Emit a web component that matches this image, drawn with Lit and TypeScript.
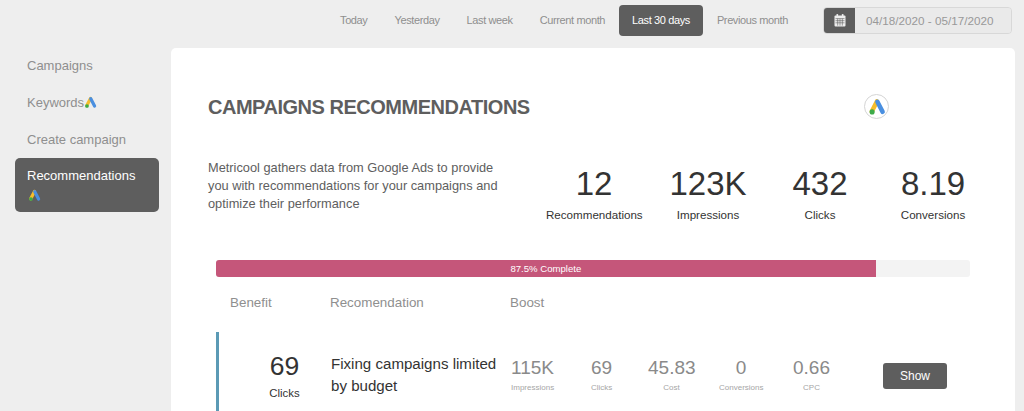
import { LitElement, html, css, svg } from "lit";
import { customElement } from "lit/decorators.js";

const ads = (size: number) => html`<svg class="ads" width=${size} height=${size} viewBox="0 0 24 24" aria-hidden="true">
  ${svg`<path d="M12 4.5 L5 18" stroke="#f6bd2b" stroke-width="6" stroke-linecap="round" fill="none"/>
  <path d="M12.5 5 L19.5 18.5" stroke="#4a8fe0" stroke-width="6" stroke-linecap="round" fill="none"/>
  <circle cx="5.5" cy="18.5" r="3.4" fill="#3dab4a"/>`}
</svg>`;

const calendar = html`<svg width="12" height="13" viewBox="0 0 12 13" aria-hidden="true">
  ${svg`<rect x="0.5" y="1.5" width="11" height="11" rx="1" fill="#eee"/>
  <rect x="2.5" y="0" width="1.6" height="3" rx=".6" fill="#eee"/>
  <rect x="7.9" y="0" width="1.6" height="3" rx=".6" fill="#eee"/>
  <path d="M1.5 4.6h9M1.5 6.7h9M1.5 8.8h9M3.7 4.6v7M6 4.6v7M8.3 4.6v7" stroke="#5e5e5e" stroke-width=".6" fill="none"/>`}
</svg>`;

@customElement("app-root")
export class AppRoot extends LitElement {
  static styles = css`
    :host {
      display: block;
      width: 1024px;
      height: 411px;
      overflow: hidden;
      background: #eeeeee;
      font-family: "Liberation Sans", Arial, sans-serif;
      color: #5e5e5e;
    }
    .top {
      height: 48px;
      display: flex;
      justify-content: flex-end;
      align-items: flex-start;
      padding: 5px 12px 0 0;
      box-sizing: border-box;
    }
    .ranges {
      display: flex;
      gap: 1px;
      margin-right: 22px;
    }
    .range {
      height: 31px;
      line-height: 31px;
      padding: 0 13px;
      border-radius: 4px;
      font-size: 11px;
      letter-spacing: -0.38px;
      color: #8f8f8f;
    }
    .range.on {
      background: #5e5e5e;
      color: #fff;
    }
    .date {
      display: flex;
      width: 189px;
      height: 27px;
      margin-top: 2px;
      border-radius: 4px;
      overflow: hidden;
      border: 1px solid #d8d8d8;
      box-sizing: border-box;
    }
    .date-icon {
      width: 31px;
      background: #5e5e5e;
      display: flex;
      align-items: center;
      justify-content: center;
    }
    .date-text {
      flex: 1;
      font-size: 11.7px;
      line-height: 25px;
      padding-left: 11px;
      color: #999;
      background: #eaeaea;
    }
    .body {
      display: flex;
      align-items: flex-start;
    }
    .side {
      width: 144px;
      margin: 0 12px 0 15px;
      font-size: 13px;
      color: #8f8f8f;
      display: flex;
      flex-direction: column;
    }
    .side-item {
      padding: 9px 12px 10px;
      line-height: 18px;
      height: 37px;
      box-sizing: border-box;
      display: flex;
      align-items: flex-start;
      flex-wrap: wrap;
    }
    .side-item .ads { margin-top: 2px; }
    .side-item.active {
      height: 54px;
      margin-top: -1px;
      background: #5e5e5e;
      color: #fff;
      border-radius: 5px;
      padding-top: 9px;
    }
    .side-item.active .label { width: 100%; }
    .side-item.active .ads { margin-top: 3px; margin-left: 1px; }
    .card {
      width: 844px;
      height: 363px;
      background: #fff;
      border-radius: 5px 5px 0 0;
      padding: 0 45px 0 37px;
      box-sizing: border-box;
    }
    .head {
      height: 95px;
      padding-top: 45px;
      box-sizing: border-box;
      display: flex;
      align-items: flex-start;
    }
    h1 {
      margin: 0;
      font-size: 20px;
      letter-spacing: -0.48px;
      line-height: 28px;
      font-weight: 700;
      color: #5e5e5e;
      width: 656px;
      white-space: nowrap;
    }
    .logo {
      width: 25px;
      height: 25px;
      margin: 1px 0 0 0;
      border: 1px solid #d5d5d5;
      border-radius: 50%;
      box-sizing: border-box;
      display: flex;
      align-items: center;
      justify-content: center;
    }
    .summary {
      display: flex;
      height: 117px;
      padding-top: 16px;
      box-sizing: border-box;
    }
    .intro {
      margin: 0;
      width: 300px;
      font-size: 12.8px;
      line-height: 18px;
      color: #5e5e5e;
    }
    .stats {
      display: flex;
      margin-left: 38px;
      margin-top: 7px;
    }
    .stat {
      text-align: center;
      color: #333;
      flex: none;
      white-space: nowrap;
    }
    .stat b {
      display: block;
      font-weight: 400;
      font-size: 33px;
      line-height: 36px;
      color: #333;
    }
    .stat span {
      display: block;
      font-size: 11.6px;
      line-height: 16px;
      margin-top: 5px;
    }
    .progress {
      margin-left: 8px;
      width: 754px;
      height: 17px;
      border-radius: 3px;
      background: #f3f3f3;
      overflow: hidden;
    }
    .bar {
      height: 100%;
      background: #c5567a;
      color: #fff;
      font-size: 9.6px;
      line-height: 17px;
      text-align: center;
    }
    .cols {
      display: flex;
      padding: 18px 0 0 22px;
      height: 55px;
      box-sizing: border-box;
      font-size: 13.4px;
      line-height: 16px;
      color: #8f8f8f;
    }
    .cols .c1 { width: 100px; }
    .cols .c2 { width: 180px; }
    .row {
      margin-left: 8px;
      width: 754px;
      height: 90px;
      border-left: 3px solid #5b9ab5;
      box-sizing: border-box;
      display: flex;
      align-items: flex-start;
    }
    .benefit {
      width: 131px;
      padding: 19px 0 0 0;
      text-align: center;
      color: #333;
      box-sizing: border-box;
    }
    .benefit b {
      display: block;
      font-weight: 400;
      font-size: 26.5px;
      line-height: 30px;
    }
    .benefit span {
      display: block;
      font-size: 11.4px;
      line-height: 14px;
      margin-top: 5px;
    }
    .rec {
      width: 180px;
      margin: 21px 0 0 -19px;
      box-sizing: border-box;
      font-size: 15.1px;
      line-height: 22px;
      color: #333;
      flex: none;
    }
    .boost {
      display: flex;
      margin-top: 24px;
      flex: none;
    }
    .metric {
      text-align: center;
      color: #8a8a8a;
      flex: none;
      white-space: nowrap;
    }
    .metric b {
      display: block;
      font-weight: 400;
      font-size: 19px;
      line-height: 24px;
    }
    .metric span {
      display: block;
      font-size: 8px;
      line-height: 10px;
      margin-top: 3px;
      color: #a6a6a6;
    }
    .show {
      margin: 31px 0 0 53px;
      width: 64px;
      height: 26px;
      line-height: 26px;
      text-align: center;
      background: #5e5e5e;
      color: #fff;
      font-size: 12px;
      border-radius: 3px;
      flex: none;
    }
  `;

  render() {
    const ranges = ["Today", "Yesterday", "Last week", "Current month", "Last 30 days", "Previous month"];
    const stats = [
      ["12", "Recommendations", 96, 0],
      ["123K", "Impressions", 78, 27],
      ["432", "Clicks", 56, 45],
      ["8.19", "Conversions", 66, 52],
    ];
    const metrics = [
      ["115K", "Impressions", 42, 0],
      ["69", "Clicks", 21, 38],
      ["45.83", "Cost", 47, 36],
      ["0", "Conversions", 44, 24],
      ["0.66", "CPC", 37, 30],
    ];
    return html`
      <div class="top">
        <div class="ranges">
          ${ranges.map((r) => html`<div class="range ${r === "Last 30 days" ? "on" : ""}">${r}</div>`)}
        </div>
        <div class="date">
          <div class="date-icon">${calendar}</div>
          <div class="date-text">04/18/2020 - 05/17/2020</div>
        </div>
      </div>
      <div class="body">
        <nav class="side">
          <div class="side-item"><span class="label">Campaigns</span></div>
          <div class="side-item"><span class="label">Keywords</span>${ads(13)}</div>
          <div class="side-item"><span class="label">Create campaign</span></div>
          <div class="side-item active"><span class="label">Recommendations</span>${ads(13)}</div>
        </nav>
        <main class="card">
          <div class="head">
            <h1>CAMPAIGNS RECOMMENDATIONS</h1>
            <div class="logo">${ads(18)}</div>
          </div>
          <div class="summary">
            <p class="intro">Metricool gathers data from Google Ads to provide you with recommendations for your campaigns and optimize their performance</p>
            <div class="stats">
              ${stats.map(([v, l, w, m]) => html`<div class="stat" style="width:${w}px;margin-left:${m}px"><b>${v}</b><span>${l}</span></div>`)}
            </div>
          </div>
          <div class="progress"><div class="bar" style="width:87.5%">87.5% Complete</div></div>
          <div class="cols"><div class="c1">Benefit</div><div class="c2">Recomendation</div><div>Boost</div></div>
          <div class="row">
            <div class="benefit"><b>69</b><span>Clicks</span></div>
            <div class="rec">Fixing campaigns limited by budget</div>
            <div class="boost">
              ${metrics.map(([v, l, w, m]) => html`<div class="metric" style="width:${w}px;margin-left:${m}px"><b>${v}</b><span>${l}</span></div>`)}
            </div>
            <div class="show">Show</div>
          </div>
        </main>
      </div>
    `;
  }
}
